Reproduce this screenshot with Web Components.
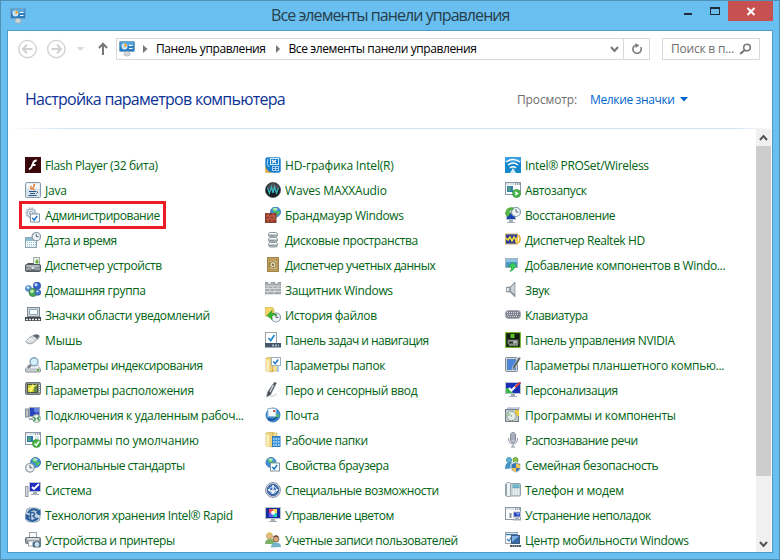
<!DOCTYPE html>
<html lang="ru">
<head>
<meta charset="utf-8">
<title>Все элементы панели управления</title>
<style>
html,body{margin:0;width:780px;height:560px;overflow:hidden}
body{font-family:"Open Sans","Noto Sans",sans-serif;font-size:12px;color:#000}
</style>
</head>
<body>
<cp-window></cp-window>
<script>
const P=(d,f,x='')=>`<path d="${d}" fill="${f}" ${x}/>`;
const L=(d,s,w=1,x='')=>`<path d="${d}" fill="none" stroke="${s}" stroke-width="${w}" ${x}/>`;
const R=(x,y,w,h,f,s,r=0)=>`<rect x="${x}" y="${y}" width="${w}" height="${h}" rx="${r}" fill="${f}" ${s?`stroke="${s}"`:''}/>`;
const C=(x,y,r,f,s,w=1)=>`<circle cx="${x}" cy="${y}" r="${r}" fill="${f}" ${s?`stroke="${s}" stroke-width="${w}"`:''}/>`;
const globe=(x,y,r)=>C(x,y,r,'#3f8ed6','#2a6bb0',.8)+P(`M${x-r*.7} ${y-r*.5}q${r*.7} ${-r*.7} ${r} 0q${-r*.1} ${r*.7} ${-r*.6} ${r*.5}zM${x+r*.1} ${y+r*.1}q${r*.6} ${-r*.5} ${r*.8} .2l${-r*.7} ${r*.6}z`,'#54c848')+P(`M${x-r*.6} ${y-r*.6}q${r*.5} ${-r*.5} ${r*1.1} 0l${-r*.5} ${r*.4}z`,'#e0fbe9','opacity=".65"');
const clock=(x,y,r)=>C(x,y,r,'#eef4f7','#8b9aa5',1.2)+L(`M${x} ${y-r*.65}V${y}H${x+r*.55}`,'#55636e',1);
const win=R(.5,.5,15,12,'#fff','#8b98a3')+R(1,1,14,2,'#dfe5ea')+L('M10 2h1M12 2h1M14 2h1','#536675');
const check=(x,y)=>R(x+.5,y+.5,9,8,'#fff','#7e93a5')+L(`M${x+2.2} ${y+4.5}l2 2 3-4`,'#1d78c9',1.5);
const folder=P('M1 1l7-1v15l-7-1z','#edd27a','stroke="#c5a23d" stroke-width=".6"')+P('M8 1h4v13H8z','#f8e49d','stroke="#c5a23d" stroke-width=".6"')+P('M1.3 2l3 1v12l-3-1z','#f9edb8');
const monitor=(x,y,w,h,f)=>R(x+.5,y+.5,w-1,h-1,f,'#b9c3cb')+P(`M${x+w/2-2} ${y+h}h4v2h2v1h-8v-1h2z`,'#a3adb5');
const cpl=R(.5,.5,15,10,'#2b7fc0','#6fa3c8',1)+R(1.5,1,13,4,'#5ba8dc')+C(5.5,5.5,2.6,'#b9dcf3','#fff',.8)+P('M5.500 5.500V2.500a3 3 0 0 1 2.600 3z','#f59e22')+L('M10 4.500h3.500M10 7.500h3.500','#fff',1.1)+P('M5 12.500l1.500-2h3l1.500 2v1.500q-3 2.500-6 0z','#cfd4d7','stroke="#9aa2a7" stroke-width=".5"');
const ICONS={
cpl,
flash:R(0,0,16,16,'#340608')+R(1,1,14,14,'none','#4a0b10')+L('M11.800 3.500q-3-.3-4 3.500T4 12.500M6.500 8h4','#fff',1.8),
java:R(.5,.5,15,15,'#d7e2ea','#8799aa',1)+R(1.5,1.500,13,5,'#f5f9fb')+L('M8.500 2q2 1.200 0 3t1 3M6.500 4q-2 2 .5 3.500','#e46b1b',1.2)+L('M4 9.500h7M5 11.500h5M3.500 13.500h8M11.500 9.500q2.500 .500 0 2','#2b5789',1),
admin:C(6,6,4,'#e4ecf2','#a5b6c3',1.5)+C(6,6,5.2,'none','#8fa4b4',1).replace('/>',' stroke-dasharray="1.5 1.6"/>')+C(6,6,1.600,'#fff','#92a6b5')+check(5,6.500),
date:R(.5,5.500,11,10,'#fff','#8ba5b3')+R(1,6,10,3,'#8bbbd2')+L('M2 10.500h9M2 12.500h9M2 14h9','#8fbdd2',1,'stroke-dasharray="1 1"')+clock(11.300,4.700,4.200),
device:R(8.5,.5,6,8,'#edf2e9','#a0abaa')+P('M10 5l2-3 2 3-2 2z','#69ac41')+L('M3 8V6.500h5V8','#4d565d',1.2)+R(.5,7.500,15,7,'#68727a','#515a61',1)+R(1.5,8,13,2.500,'#aeb6bb')+R(6.500,10,3,2,'#dfe3e5')+L('M1 12h5M10 12h5','#c5cbce'),
home:C(3.500,6.5,3,'#5d98dd','#3c6db5',.7)+C(12,3.8,3.7,'#2f63c7','#2a4a99',.7)+C(8,10.500,4,'#4aa556','#327d44',.8)+C(13,10.500,2.800,'#3e75cf','#2d509f',.7)+C(3,5.500,1.3,'#d2e8ff')+C(11,2.700,1.6,'#c0daff')+C(7,9.300,1.7,'#c9efb8')+C(12.4,9.500,1.1,'#d0e3ff'),
tray:R(2.500,.500,12,9,'#cfd7df','#7e8891')+R(4.5,2.500,8,5,'#f5fafe','#91a8b9')+R(0,10,16,4,'#42484d')+L('M1 12.500h14','#e8ebed',1.500,'stroke-dasharray="2 1"'),
mouse:P('M2 8q5-6 11-5 3 1 0 4l-5 4q-3 2-6 0-2-1 0-3z','#d9dde0','stroke="#868c93" stroke-width=".7"')+P('M9 3q3-1 5.500 .5L12 7.500q-1-3-4-3z','#5e6772')+L('M2 9q4-3 6-1','#fff'),
index:R(.5,11.500,15,3.500,'#cbd1d4','#8b9397',1)+P('M3 8h10l2 4H1z','#e8ecee','stroke="#a0a7ac" stroke-width=".7"')+R(12,12,2,2,'#51b331')+C(9,4.800,4,'#d4eefa','#87a8be',1.4)+L('M6 8l-3 3','#69747c',2),
location:R(.5,.5,15,12,'#8d9498','#6d7377',1)+R(2.500,2.500,10,8,'#cbcf37','#4c553a')+L('M3 8l4-3 1-2.500M5 10l3-5 4-2','#fff76f',1.500)+P('M9 5l3-2v7H9z','#648b45')+L('M14.500 3v7','#f0f3f4',1,'stroke-dasharray="1 1"'),
remote:R(.5,2,3,8,'#bdc4ca','#838c94')+R(4.500,.5,10,9,'#2945bd','#9da9b8')+P('M9 1h5v4q-3 2-5-1z','#6684dd')+L('M4 12h5','#a4adb5',2)+C(11.500,11.5,4,'#e8eee8','#9ba89d')+L('M8.500 10l2 2-2 2M14.500 9.500l-2 2 2 2','#388d4c',1.300),
defaults:win+R(2,4,6,6,'#277bb1')+R(3,5,2.500,4,'#5ca47b')+R(10,4,4,7,'#dde4e9')+C(11.500,11.500,4,'#42b43c','#3b9a44',.8)+L('M9.500 11.500l1.700 1.800 3-4','#fff',1.500),
region:globe(10.500,5.500,5)+clock(5,10.800,4.300),
system:R(.5,4.500,2.500,10,'#d5d9dc','#979fa4')+monitor(4,0,12,10,'#202bc0')+L('M7 5l2 2 5-5','#fff',1.900),
rapid:R(1,1,14,14,'#c6d6e2','#8fa6b8',4)+L('M3 6q4-6 10-2l1 4M13 11q-5 5-10 1l-1-4','#2a5f9b',2.200)+P('M15.500 2v6l-5-2zM.5 13V7l5 2z','#2a5f9b')+L('M5.500 12V5.500h3q2.500 2-.500 3.500l3 3','#2a5f9b',1.500),
printer:R(4.500,.500,7,6,'#f8fafc','#9aa4ab')+R(.5,5.500,15,6,'#949ca1','#697279',1)+L('M2 7h12','#d5dadf',2)+R(3.500,9,8,5,'#fff','#a1a9af')+R(8,10,7.500,5,'#496b82','#5b7688',1)+C(12,12.500,1.800,'#a4d6ee','#fff'),
hd:R(.5,.5,15,15,'#1a7fcb','#5aa5dc',2)+P('M0 8q1 7 9 8H2q-2 0-2-2z','#e9b252')+L('M3 2q-2 5 1 8','#b5daf3',1)+R(5.500,1.500,8,6,'none','#d3ecfc')+L('M7 3l4 3M11 3L7 6','#fff',1.300)+R(7,9,7,5,'#a9d4f2')+L('M8 10.500h5M8 12.500h5','#1a6db3',1,'stroke-dasharray="2 1"'),
waves:C(8,8,7.600,'#171c1f','#50585d',.8)+P('M1.500 6q6.500-10 13 0-6 3-13 0z','#4b5257')+L('M2.500 6l2 5 2-6 1.500 6 1.500-6 2 6 2-5','#3fb2c3',1.300),
firewall:globe(10.500,5,5)+R(.5,6.500,10.500,9,'#9d392a','#7c4033')+L('M1 9h10M1 12h10M3 6v3M8 6v3M5 9v3M9 9v3M3 12v3M7 12v3','#c4705b',.8),
disks:[0,5,10].map(y=>R(3.500,y+.5,9,4.500,'#c7ced2','#8e959b',2)+L(`M4.500 ${y+1.500}h7`,'#fff')+L(`M4.500 ${y+3.500}h5`,'#8d959b')+R(10.500,y+3,1,1,'#45a843')).join(''),
vault:R(2.500,.5,11,14,'#c2a060','#a08348')+R(4.500,3,7.500,9.500,'#d9be80','#ab8e4f')+C(8,7.700,3,'#eee2b8','#8e7e50')+C(8,7.700,1.200,'#7d7049'),
defender:P('M0 0h3v2h3V0h4v2h3V0h3v12H0z','#a7acaf','stroke="#84898d" stroke-width=".5"')+L('M0 4h16M0 6.500h16M0 9.500h16M3 4v2.500M8 4v2.500M13 4v2.500M5 7v2.500M10 7v2.500M3 10v2M9 10v2','#dadde0',.9),
history:P('M0 0h7l2 2v7H0z','#f4d56d','stroke="#d6ad46" stroke-width=".7"')+clock(11,10.500,4.500)+P('M2 8.500l5-5v3q5 0 5 2-3-1-5 0v4z','#38b62c','stroke="#188128" stroke-width=".5"'),
taskbar:R(.500,.5,11,11,'#fff','#9aa2a8')+L('M3.500 6l2.200 2.500L9.500 3','#1e87d0',1.700)+R(0,11,16,4.500,'#44566b')+L('M7 13.500h7','#a6b7c8',2,'stroke-dasharray="2 1"'),
folderopts:folder+check(6,0).replaceAll('#7e93a5','#9aaec1')+P('M12 9h2v6h-2z','#a9cfe8'),
pen:P('M9.500 0l2 1-6 12-4 2 1-5z','#4a5055','stroke="#8d969e" stroke-width=".6"')+L('M8.500 3L5 10','#dce1e6',1.200)+L('M5 14.500q4 0 7-3','#dde0e2',1.500),
mail:globe(8,8,7)+R(3,1.500,8,8,'#f9fcff','#94b7d6')+R(8,3,2,2,'#ce5544')+L('M3 12q6 2 9-2','#1d55a0',2),
work:folder+R(7.500,4.500,7.500,10,'#3f94d5','#2a77b9')+L('M8 7h7M8 10h7M8 13h7','#b9e6ff',1.500,'stroke-dasharray="1.5 1"'),
browser:globe(6,5.500,5)+check(5,5.500),
access:C(8,8,7.400,'#d5dce4','#8390a5')+C(8,8,5.700,'#2f64b4','#4a679a')+C(8,8,3.500,'none','#dbe7f7',1)+L('M8 3v7.500M5.500 8L8 10.500 10.500 8M3 8h2M11 8h2','#fff',1.300),
color:monitor(0,0,16,12,'#1a2ba0')+R(4,2,4,4,'#f13e5d')+R(8,2,4,4,'#f5da54')+R(4,6,4,4,'#5c59f4')+R(8,6,4,4,'#28cbbb')+C(8,5.700,2,'#fff'),
users:C(4.500,4,3,'#e5bd84','#b98d50',.7)+P('M0 12q0-5 5-5t5 5z','#7db166')+C(11,7,3,'#d9a780','#7d5b42',.8)+P('M6 15.500q0-5 5-5t5 4.500z','#76b3cb')+L('M2.500 2.500q2-2.500 4 0','#e3c35f',2)+L('M9 5q2-2 4 0','#6b4a33',1.500),
wireless:R(0,0,16,16,'#1689ca')+R(0,0,16,5,'#399fe0')+L('M1 5q7-5 14 0M3 8q5-4 10 0M5 11q3-2.500 6 0','#fff',1.500)+P('M8 11l3 5H5z','#d5ecfa'),
autorun:win+R(2,4,6,6,'#347eab')+R(3,5,2.500,4,'#52a274')+C(11.500,11.500,4,'#48b54a','#3a9a41',.8)+P('M10.300 9.300v4.500l3.500-2.300z','#fff'),
restore:monitor(1,5,10,8,'#1942b5')+clock(11,5,4.500)+P('M1 5q0-4.500 7-4.500v2Q4 3 4 6h2l-3.500 4L0 6z','#59b845','stroke="#2f862a" stroke-width=".5"'),
realtek:R(.5,2,12,10,'#2c3a9a','#cdb16b')+L('M1 6l2 2 2-3 2 4 2-4 2 3','#f5de34',1.600)+L('M13.500 3q3 4 0 8','#e6aa32',1.500)+P('M10 7l3-3v9l-3-3z','#f3c64d'),
features:R(.5,1.500,12,9,'#4b97c6','#9fb4c2')+R(1,2,11,3,'#8dc3e0')+P('M3 9.500l5-4 4 4.500h-2.500q0 3-4.500 4.500 2-2 1.500-4.500z','#38d05a','stroke="#1c9c3b" stroke-width=".6"'),
sound:P('M1.500 5h3.500l5-5v15l-5-5H1.500z','#929ba2','stroke="#7d868d" stroke-width=".6"')+P('M6 5l3.500-3v10L6 9z','#cfd6da')+P('M2 6h2v3H2z','#e4e9eb'),
keyboard:R(.5,3.500,15,8,'#80838f','#a6aab4',3)+L('M2 5.500h12M2 7.500h12M3 9.500h10','#d7d9e0',1,'stroke-dasharray="1 1"'),
nvidia:R(.7,.7,14.600,14.600,'#151c12','#67b816')+R(5.500,2,4,4,'#57c724')+R(3,8,10,4,'#aeb8af','#5e6861')+R(4,9.500,4,2,'#242c25')+L('M4 13h9','#d5dfd5'),
tablet:R(.5,.5,12,14,'#ccd4dc','#828c97',1)+R(2.500,2.500,8,10,'#4b85de','#5c83bb')+P('M14 0l2 1-6 10-3 2 1-4z','#56616a','stroke="#f1f5f7" stroke-width=".5"'),
personal:monitor(0,0,16,12,'#1b2fb6')+P('M1 6q5 0 7 5H1z','#36b947')+L('M4 6l2.500 2.500 6-6','#fff',2)+L('M10 5l5.500-4.500','#cc3632',1.800),
programs:P('M2 1.500l2-1.500h11l-1 2z','#e7edf1','stroke="#8f9ad0" stroke-width=".6"')+R(.5,2.500,13,12,'#c2cdd1','#717e88')+R(10,3,4,6,'#e8c942')+C(6.500,9,4.700,'#e3e8e4','#93a496')+C(6.500,9,1.500,'#91aba3','#fff')+P('M4 6l2 2-4 2z','#98c89a'),
speech:R(5.500,.5,5,10,'#c5c9d2','#838a98',2.500)+L('M6 3h4M6 5h4M6 7h4','#8087a0',.8)+L('M3.500 6q0 6 4.500 6t4.500-6M8 12v3M6 15h4','#8b91a3',1),
family:C(4,3,2.500,'#61b8d6','#4692ba')+C(10.500,3,2.500,'#8ac449','#68a03e')+P('M0 12q0-7 5-7t4 6z','#4895c3')+P('M9 7q4-4 7 2l-3 4z','#efb94f')+P('M6 7l5-2 4.500 2v4q0 3-4.500 4.500-5-1.500-5-4.500z','#3d77b4','stroke="#e3e8ed"')+P('M11 6l4 2v3h-4zM7 11h4v4q-4-1-4-4z','#f2c650'),
phone:R(.5,1.500,15,12.500,'#c8d3da','#93a0a9',1)+R(1.500,.500,4,14,'#eef2f4','#9ba9b2',1)+R(8,3,6,2.500,'#72c4dc','#67a7b9')+L('M8 8h6M8 10h6M8 12h6','#fafcfc',1.300,'stroke-dasharray="1.4 1"'),
trouble:win+monitor(8,4.500,8,6,'#2f43be')+R(4.500,6,2,5,'#848e98')+P('M11 6h4l-2 3z','#6c93ef'),
mobility:R(.5,.5,12,11,'#fff','#9aa6b2')+L('M1 2.500h11M2 7l2 2 3-5','#3b83b6',1.300)+R(6.500,3.500,8,8,'#356aa9','#41597a')+P('M7 4h7l-7 6z','#79b1e2')+P('M5 13h11v2H5z','#485766')+L('M7 14h8','#c4ccd5',1,'stroke-dasharray="1 1"')
};
const define=(name,html,extra)=>customElements.define(name,class extends HTMLElement{
  connectedCallback(){if(this.shadowRoot)return;this.attachShadow({mode:'open'}).innerHTML=typeof html==='function'?html(this):html;extra&&extra(this)}
});
/* Keeps a label on one line and tracks its letters to the width given in "w". */
define('fit-text',el=>`<style>:host{display:block;white-space:pre;width:${el.getAttribute('w')}px;flex:none}span{display:inline-block}</style><span>${el.getAttribute('text')}</span>`,el=>{
  const s=el.shadowRoot.querySelector('span'),n=[...s.textContent].length;
  s.style.letterSpacing=((+el.getAttribute('w')-s.getBoundingClientRect().width)/n).toFixed(4)+'px';
});
define('cp-icon',el=>`<style>:host{display:block;width:16px;height:16px;flex:none}svg{display:block}</style><svg width="16" height="16" viewBox="0 0 16 16">${ICONS[el.getAttribute('name')]}</svg>`);
define('cp-item',el=>`<style>:host{display:flex;align-items:start;height:16px;gap:4px;color:#006312;line-height:18px;position:relative}
:host([marked])::after{content:"";position:absolute;left:-6px;top:-6px;width:141px;height:22px;border:3px solid #ed1c24}</style>
<cp-icon name="${el.getAttribute('icon')}"></cp-icon><fit-text w="${el.getAttribute('w')-.8}" text="${el.getAttribute('label')}"></fit-text>`);
const ITEMS=[
['flash','Flash Player (32 бита)',113.5],['java','Java',22.500],['admin','Администрирование',115.5],['date','Дата и время',72.5],['device','Диспетчер устройств',117.5],['home','Домашняя группа',101.5],['tray','Значки области уведомлений',165.5],['mouse','Мышь',38],['index','Параметры индексирования',158.500],['location','Параметры расположения',149.500],['remote','Подключения к удаленным рабоч...',199.500],['defaults','Программы по умолчанию',154.500],['region','Региональные стандарты',140.500],['system','Система',47.500],['rapid','Технология хранения Intel® Rapid',188.500],['printer','Устройства и принтеры',130.500],
['hd','HD-графика Intel(R)',109.500],['waves','Waves MAXXAudio',102.500],['firewall','Брандмауэр Windows',119.500],['disks','Дисковые пространства',133.500],['vault','Диспетчер учетных данных',151],['defender','Защитник Windows',108.500],['history','История файлов',92.500],['taskbar','Панель задач и навигация',144.500],['folderopts','Параметры папок',101],['pen','Перо и сенсорный ввод',133],['mail','Почта',34.500],['work','Рабочие папки',83.500],['browser','Свойства браузера',104.500],['access','Специальные возможности',154.500],['color','Управление цветом',109.500],['users','Учетные записи пользователей',173.500],
['wireless','Intel® PROSet/Wireless',124.500],['autorun','Автозапуск',62.500],['restore','Восстановление',91],['realtek','Диспетчер Realtek HD',120.500],['features','Добавление компонентов в Windo...',201],['sound','Звук',25.500],['keyboard','Клавиатура',63.500],['nvidia','Панель управления NVIDIA',150.500],['tablet','Параметры планшетного компью...',200],['personal','Персонализация',93.500],['programs','Программы и компоненты',151.500],['speech','Распознавание речи',113.500],['family','Семейная безопасность',134],['phone','Телефон и модем',99.500],['trouble','Устранение неполадок',126.500],['mobility','Центр мобильности Windows',164.500]];
define('cp-list',`<style>:host{display:grid;grid-template-rows:repeat(16,16px);grid-auto-columns:240px;grid-auto-flow:column;row-gap:9px;padding:28px 0 0 17px;width:731px;box-sizing:border-box;flex:none}</style>`+
ITEMS.map(([i,l,w])=>`<cp-item icon="${i}" label="${l}" w="${w}" ${i==='admin'?'marked':''}></cp-item>`).join(''));
define('cp-scrollbar',`<style>:host{display:flex;flex-direction:column;width:15px;background:#f0f0f0;margin:0 1px 0 auto}i{height:17px;flex:none;display:grid;place-items:center}b{height:330px;background:#cdcdcd}i:last-child{margin-top:auto}svg{display:block}</style>
<i><svg width="9" height="8"><path d="M1 6l3.500-4L8 6" fill="none" stroke="#555" stroke-width="2"/></svg></i><b></b><i><svg width="9" height="8"><path d="M1 2l3.500 4L8 2" fill="none" stroke="#555" stroke-width="2"/></svg></i>`);
define('title-bar',`<style>:host{display:grid;grid-template-columns:261px 1fr 100px;height:30px;align-items:start}cp-icon{margin:7px 0 0 9px}.t{font-size:16px;line-height:22px;color:#273d4b;padding:3px 0 0 9px}svg{display:block;margin-left:-2px}</style>
<cp-icon name="cpl"></cp-icon><div class="t"><fit-text w="238.500" text="Все элементы панели управления"></fit-text></div>
<svg width="97" height="20" shape-rendering="crispEdges"><path d="M7 12h8v2H7z" fill="#1d2c36"/><path d="M33 6h10v8H33zM34 8v5h8V8z" fill="#1d2c36" fill-rule="evenodd"/><path d="M51 0h45v20H51z" fill="#c75050"/><path d="M70.500 7l7 7M77.500 7l-7 7" stroke="#fff" stroke-width="2" shape-rendering="auto"/></svg>`);
define('nav-bar',`<style>:host{display:flex;height:36px;align-items:center;padding:0 10px;box-sizing:border-box;line-height:20px}
.b{width:98px;flex:none}.a,.s{height:22px;box-sizing:border-box;border:1px solid #d9d9d9;display:flex;align-items:center;background:#fff}.a{width:534px}.s{width:98px;margin-left:12px;padding-left:8px;color:#6d6d6d}cp-icon{margin:0 8px 0 2px}.a>svg{flex:none}.g1{margin-right:8px}.g2{margin:0 9px 0 10px}.r{border-left:1px solid #d9d9d9;margin-left:4px;height:20px;width:25px;display:grid;place-items:center}.d{margin-left:auto}</style>
<svg class="b" width="98" height="22"><g fill="none" stroke="#d0d0d0"><circle cx="9.500" cy="11" r="8.700" stroke-width="1.300"/><circle cx="38.300" cy="11" r="8.700" stroke-width="1.300"/><path stroke-width="2" d="M14.500 11H5.500M9 6.800L5 11l4 4.200M33.500 11h9M39 6.800L43 11l-4 4.200"/></g><path d="M58.500 9h8l-4 4z" fill="#dcdcdc"/><path d="M85 17V6M81 10l4-4.200L89 10" fill="none" stroke="#777" stroke-width="2"/></svg>
<div class="a"><cp-icon name="cpl"></cp-icon><svg class="g1" width="5" height="8"><path d="M0 0l4.500 4L0 8z" fill="#777"/></svg><fit-text w="109.500" text="Панель управления"></fit-text><svg class="g2" width="4" height="8"><path d="M0 0l4 4-4 4z" fill="#777"/></svg><fit-text w="188" text="Все элементы панели управления"></fit-text>
<svg class="d" width="9" height="8"><path d="M1 2l3.500 4L8 2" fill="none" stroke="#777" stroke-width="2"/></svg><span class="r"><svg width="12" height="12"><path d="M9.800 4.200A4.200 4.200 0 1 1 5 2.100" fill="none" stroke="#808080" stroke-width="1.700"/><path d="M4.500 0v5l4-2.500z" fill="#808080"/></svg></span></div>
<div class="s"><fit-text w="63" text="Поиск в п..."></fit-text><svg width="13" height="12" style="margin-left:5px"><circle cx="8" cy="4.500" r="3.300" fill="none" stroke="#777" stroke-width="1.600"/><path d="M5.700 7L1.200 11" stroke="#777" stroke-width="2.200"/></svg></div>`);
define('page-head',`<style>:host{display:flex;height:61px;align-items:center;padding:2px 0 0 17px;box-sizing:border-box}.h{font-size:16px;color:#0b3296;line-height:24px}.v{display:flex;margin-left:232px;line-height:18px;color:#6d6d6d;padding-top:2px}.m{color:#0066cc;margin-left:13px}svg{margin:6px 0 0 5px}</style>
<div class="h"><fit-text w="260" text="Настройка параметров компьютера"></fit-text></div><div class="v"><fit-text w="60" text="Просмотр:"></fit-text><fit-text class="m" w="84.500" text="Мелкие значки"></fit-text><svg width="8" height="5"><path d="M0 0h8L4 4.500z" fill="#0066cc"/></svg></div>`);
define('cp-window',`<style>:host{display:block;width:780px;height:560px;box-sizing:border-box;border:1px solid #4e91b5;background:#69bff0}
.c{margin:-1px 6px 0;height:523px;box-sizing:border-box;border:1px solid #4d9bc6;background:#fff;display:flex;flex-direction:column}hr{margin:0;border:0;width:100%;height:1px;flex:none;background:linear-gradient(90deg,#fff,#d0e1f3 8%,#d0e1f3 95%,#fff)}.l{display:flex;flex:1;min-height:0}</style>
<title-bar></title-bar><div class="c"><nav-bar></nav-bar><page-head></page-head><hr><div class="l"><cp-list></cp-list><cp-scrollbar></cp-scrollbar></div></div>`);
</script>
</body>
</html>
